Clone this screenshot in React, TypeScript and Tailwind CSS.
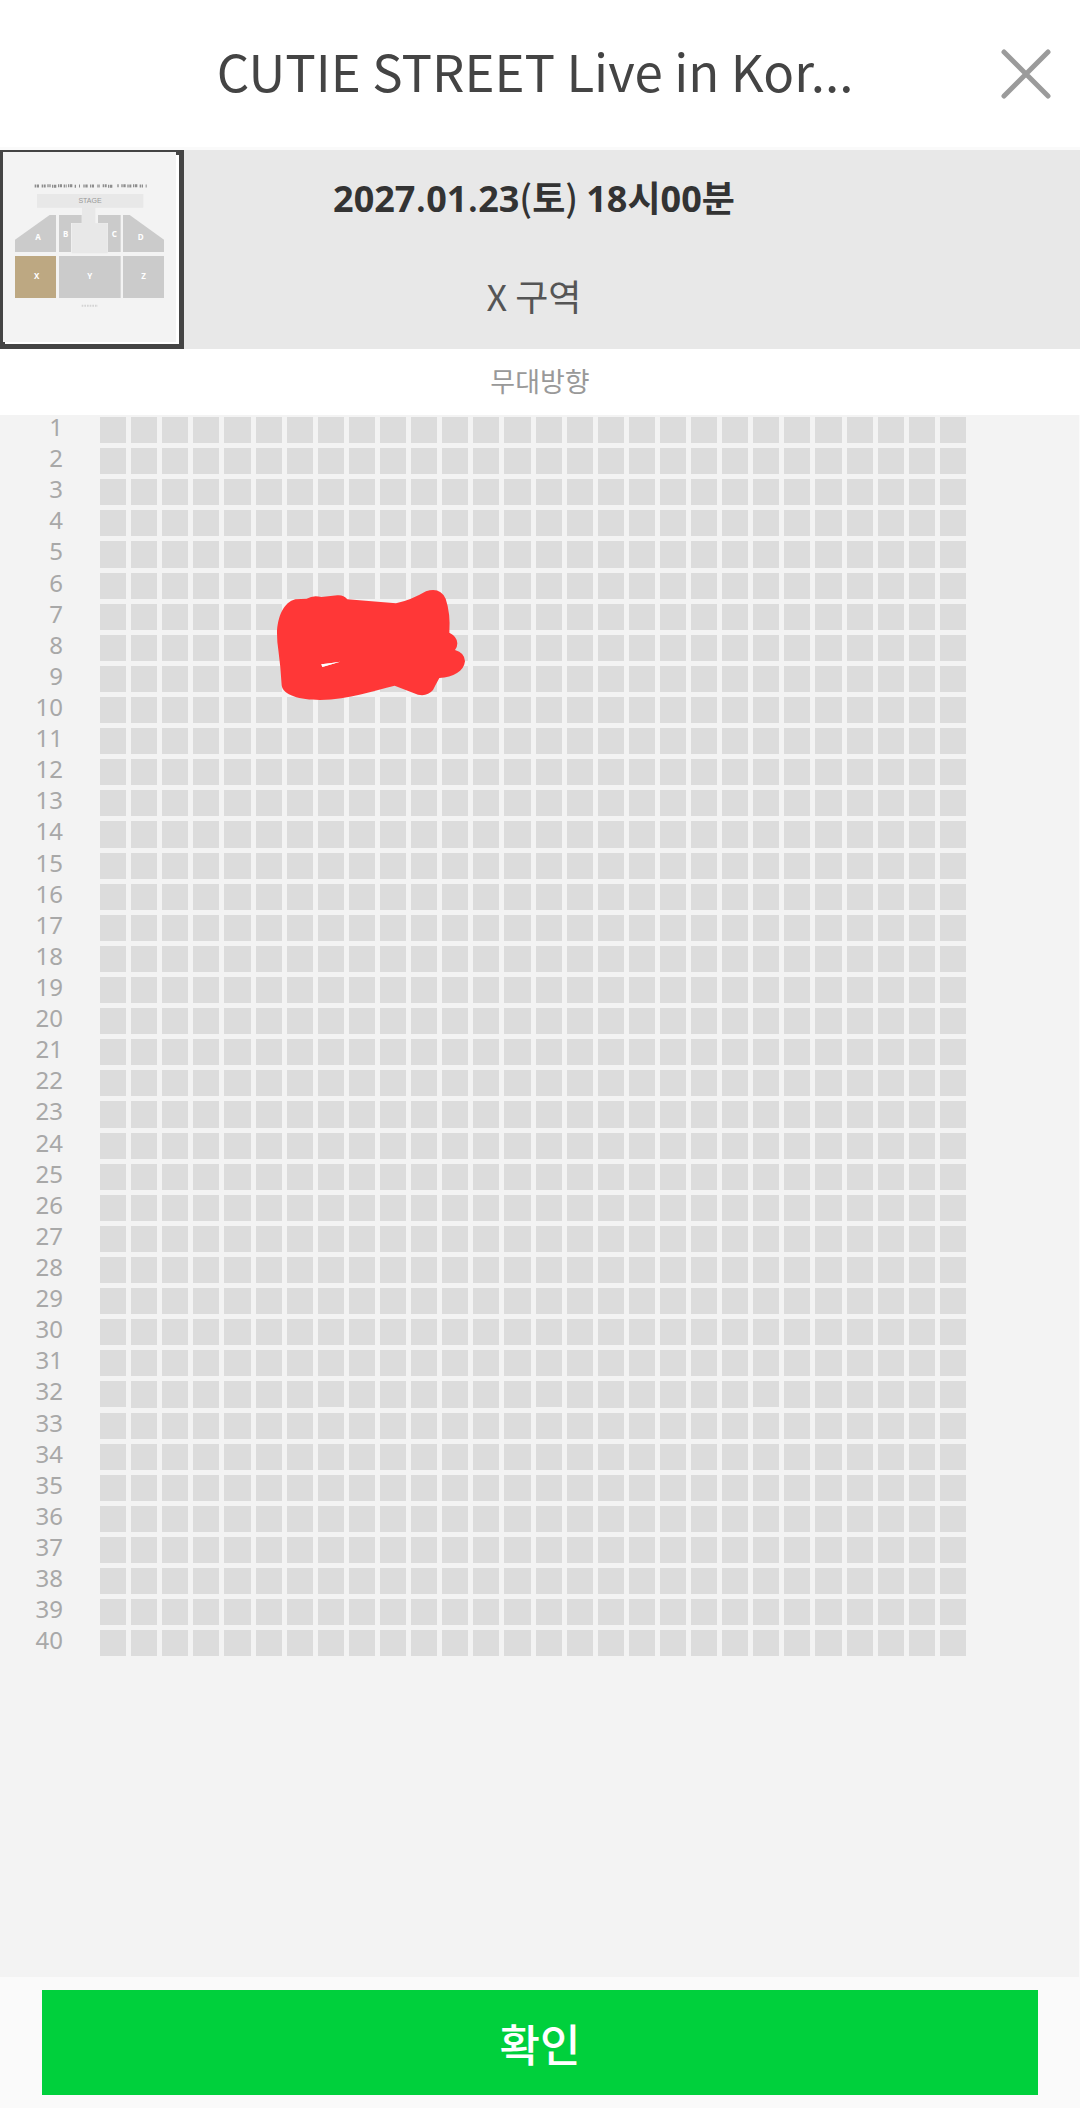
const ROWS = Array.from({ length: 40 }, (_, i) => i + 1);
const SEATS = Array.from({ length: 28 }, (_, i) => i + 1);

function VenueMap() {
  return (
    <svg
      viewBox="9 36 528 576"
      className="block w-full h-full"
      preserveAspectRatio="none"
      fontFamily="'Noto Sans', sans-serif"
      textAnchor="middle"
    >
      <rect x="9" y="36" width="528" height="576" fill="#fff" />
      <rect x="9" y="36" width="519" height="570" fill="#f3f3f3" />
      <path d="M528 36H537V45H528ZM9 606H15V612H9Z" fill="#444" />
      <path
        d="M104 138h16m5 0h12m5 -1h10m4 2h14m4 -2h12m5 1h9m4 -1h14m6 2h5m8 -1h3m10 0h14m6 0h12m10 0h8m8 -1h12m4 2h16m12 -2h4m8 0h14m4 1h12m5 -1h14m6 1h10m8 0h3"
        stroke="#8d8d8d"
        strokeWidth="9"
        strokeDasharray="4 2 7 3"
      />
      <path d="M111 162H430V203H286V250H323V340H215V250H246V203H111Z" fill="#e8e8e8" />
      <text x="270" y="190" fontSize="21" fill="#999" fontFamily="'Liberation Sans', sans-serif">
        STAGE
      </text>
      <g fill="#cbcbcb">
        <path d="M45 299L149 225H168V336H45Z" />
        <path d="M177 225H245V249H213V336H177Z" />
        <path d="M294 225H362V336H324V249H294Z" />
        <path d="M369 225H389L492 299V336H369Z" />
        <path d="M177 348H362V474H177Z" />
        <path d="M369 348H492V474H369Z" />
      </g>
      <path d="M45 348H168V474H45Z" fill="#bda882" />
      <g fill="#fff" fontSize="24" fontWeight="700">
        <text x="114" y="301">A</text>
        <text x="197" y="290">B</text>
        <text x="343" y="292">C</text>
        <text x="422" y="301">D</text>
        <text x="110" y="418">X</text>
        <text x="269" y="418">Y</text>
        <text x="431" y="418">Z</text>
      </g>
      <path d="M245 497H294" stroke="#d4d4d4" strokeWidth="6" strokeDasharray="5 3" />
    </svg>
  );
}

function Scribble() {
  return (
    <svg
      viewBox="0 0 660 420"
      className="absolute left-[260px] top-[155px] w-[220px] h-[140px]"
      aria-hidden="true"
    >
      <path
        fill="#ff3737"
        fillRule="evenodd"
        d="M51 190C52 140 72 96 106 88L140 86Q160 74 184 81L232 76Q250 74 262 88L408 100Q450 92 498 64Q540 50 557 86Q572 130 568 188Q592 200 592 220Q592 232 585 240Q614 248 615 274C612 304 580 322 538 324Q526 346 519 360Q502 380 474 374L404 347C340 362 270 388 180 390C120 390 68 376 65 346Q62 290 55 240Q51 215 51 190ZM184 283L187 291L240 275L210 280Z"
      />
      <path fill="#fff" d="M184 283L187 291L240 275L210 280Z" />
    </svg>
  );
}

export default function App() {
  return (
    <div className="flex flex-col min-h-screen bg-white font-['Noto_Sans_CJK_KR',sans-serif]">
      <header className="flex items-start h-[150px] pl-[98px] pt-8 border-b-3 border-[#fafafa]">
        <h1 className="flex-1 text-center text-[51px] leading-[76px] text-[#444] whitespace-nowrap">
          CUTIE STREET Live in Kor...
        </h1>
        <button type="button" aria-label="닫기" className="w-[108px] h-[84px] flex justify-center items-center">
          <svg viewBox="0 0 50 50" className="w-[50px] h-[50px]">
            <path
              d="M3 3L47 47M47 3L3 47"
              stroke="#9b9b9b"
              strokeWidth="5"
              strokeLinecap="round"
            />
          </svg>
        </button>
      </header>

      <section className="flex h-[199px] bg-[#e8e8e8]">
        <div className="w-[184px] shrink-0 border-[#444] border-t-2 border-l-3 border-r-5 border-b-5">
          <VenueMap />
        </div>
        <div className="flex-1 pr-[196px] pt-5 text-center text-[36px] leading-[52px]">
          <p className="font-bold text-[#333]">
            <span className="font-['Noto_Sans']">2027</span>
            <span className="font-medium">.</span>
            <span className="font-['Noto_Sans']">01</span>
            <span className="font-medium">.</span>
            <span className="font-['Noto_Sans']">23</span>
            <span className="font-medium">(</span>토<span className="font-medium">)</span>{" "}
            <span className="font-['Noto_Sans']">18</span>시
            <span className="font-['Noto_Sans']">00</span>분
          </p>
          <p className="mt-11 text-[#555]">X 구역</p>
        </div>
      </section>

      <p className="h-[66px] text-center text-[27px] leading-[64px] text-[#999]">무대방향</p>

      <main className="relative flex-1 bg-[#f3f3f3] pt-[2px] pr-[113px] border-r border-[#fafafa]">
        <div className="flex flex-col gap-[5px]">
          {ROWS.map((row) => (
            <div className="flex" key={row}>
              <span className="w-[100px] h-5 shrink-0 pr-[37px] text-right text-[24px] leading-[20px] text-[#a8a8a8] font-['Noto_Sans']">
                {row}
              </span>
              <div className="flex-1 grid grid-cols-28 gap-[5px]">
                {SEATS.map((seat) => (
                  <button
                    type="button"
                    disabled
                    key={seat}
                    aria-label={`${row}열 ${seat}번`}
                    className="aspect-square bg-[#dcdcdc]"
                  />
                ))}
              </div>
            </div>
          ))}
        </div>
        <Scribble />
      </main>

      <footer className="bg-[#fafafa] px-[42px] py-[13px]">
        <button
          type="button"
          className="block w-full h-[105px] bg-[#00d03c] text-[44px] leading-[102px] font-medium text-white"
        >
          확인
        </button>
      </footer>
    </div>
  );
}
